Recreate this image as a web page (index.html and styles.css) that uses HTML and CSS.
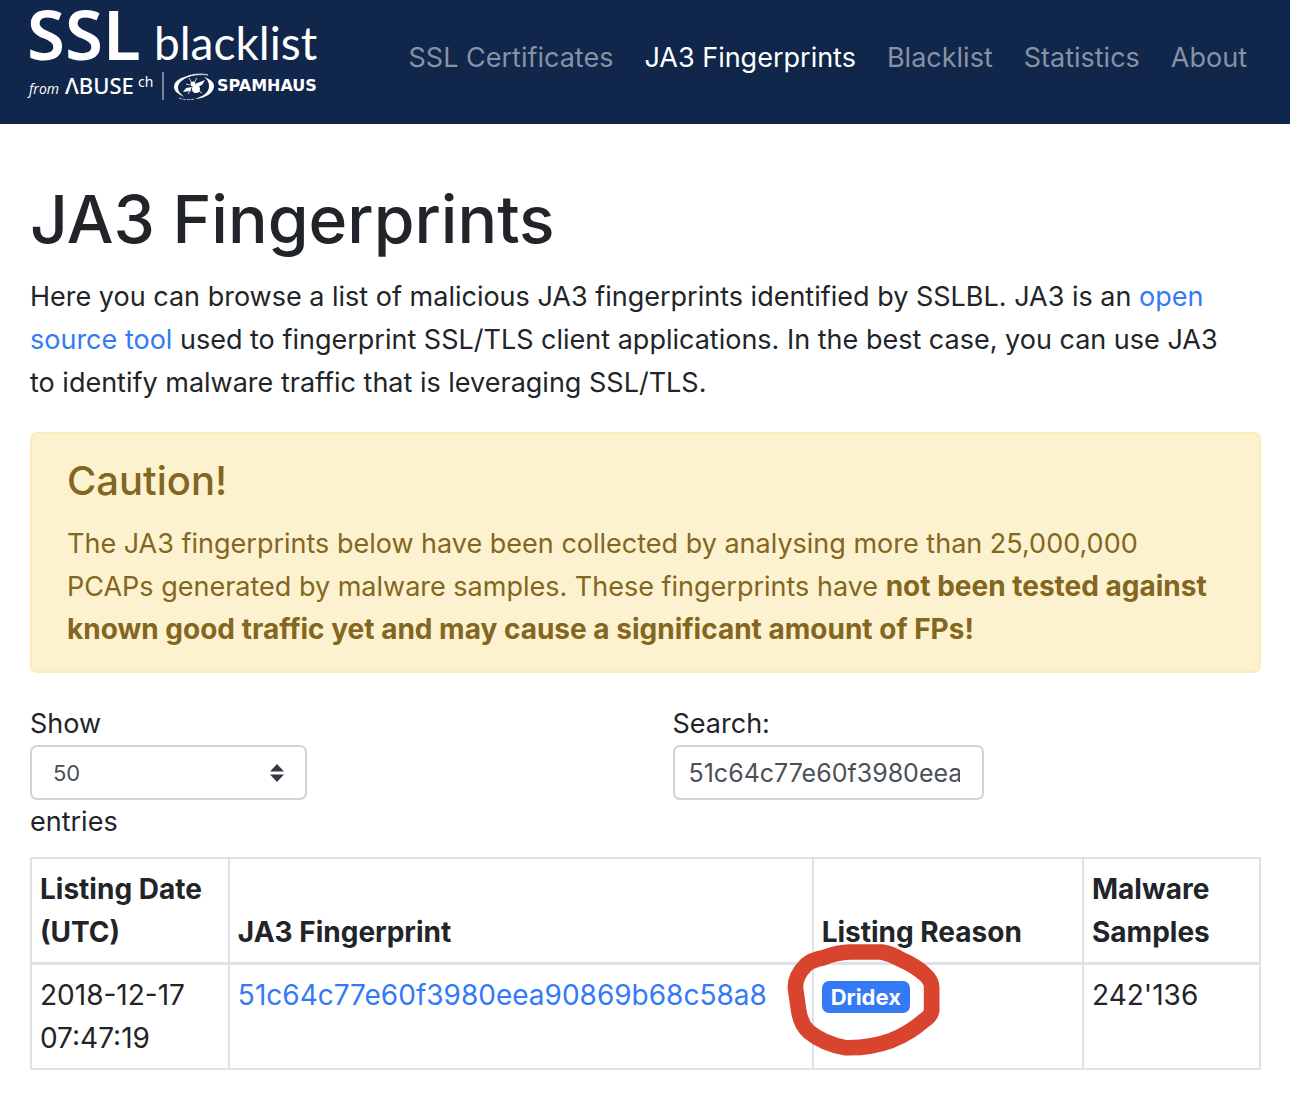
FILE: index.html
```html
<!DOCTYPE html>
<html lang="en">
<head>
<meta charset="utf-8">
<title>SSLBL | JA3 Fingerprints</title>
<meta name="viewport" content="width=device-width, initial-scale=1">
<link rel="stylesheet" href="styles.css">
</head>
<body>
<header class="navbar">
  <a class="brand" href="#" aria-label="SSL blacklist">
    <svg class="logo" viewBox="0 0 290 100" width="290" height="100">
      <text class="logo-ssl" x="-3" y="52">SSL</text>
      <text class="logo-blacklist" x="124" y="52">blacklist</text>
      <text class="logo-from" x="-1" y="86">from</text>
      <text class="logo-abuse" x="35" y="86">ΛBUSE</text>
      <text class="logo-ch" x="108" y="79">ch</text>
      <path d="M133 64v28" stroke="#9aa6b8" stroke-width="1.5"/>
      <g fill="#fff">
        <path d="M164 67C153 68 144 72 144 79c0 4 4 7 10 10-4-4-6-6-6-9 0-6 6-10 16-13z"/>
        <path d="M158 68c5-2 13-3 20-1-6-1-12 0-20 1z" stroke="#fff" stroke-width=".6"/>
        <path d="M174 69c6 2 10 5 10 9 0 6-7 12-19 13 9-3 14-7 14-13 0-4-2-7-5-9z"/>
        <path d="M149 90c5 2 11 2 16 1" fill="none" stroke="#fff" stroke-width=".7" stroke-dasharray="3 1"/>
        <ellipse cx="166" cy="81" rx="4" ry="4"/>
        <circle cx="163" cy="76" r="2.5"/>
        <path d="M165 76l10-4-3 5-5 2zM162 79l-6 1-3 4 7-1z"/>
        <path d="M162 75l-3-5M164 75l3-5M160 77l-4-1M161 82l-3 4M169 83l3 2" fill="none" stroke="#fff" stroke-width=".8"/>
      </g>
      <text class="logo-spamhaus" x="187" y="83">SPAMHAUS</text>
    </svg>
  </a>
  <nav class="menu">
    <a class="menu-link" href="#">SSL Certificates</a>
    <a class="menu-link active" href="#" aria-current="page">JA3 Fingerprints</a>
    <a class="menu-link" href="#">Blacklist</a>
    <a class="menu-link" href="#">Statistics</a>
    <a class="menu-link" href="#">About</a>
  </nav>
</header>
<main class="content">
  <h1 class="title">JA3 Fingerprints</h1>
  <p class="intro">Here you can browse a list of malicious JA3 fingerprints identified by SSLBL. JA3 is an <a href="#">open source tool</a> used to fingerprint SSL/TLS client applications. In the best case, you can use JA3 to identify malware traffic that is leveraging SSL/TLS.</p>
  <section class="alert">
    <h2 class="alert-title">Caution!</h2>
    <p class="alert-text">The JA3 fingerprints below have been collected by analysing more than 25,000,000 PCAPs generated by malware samples. These fingerprints have <strong>not been tested against known good traffic yet and may cause a significant amount of FPs!</strong></p>
  </section>
  <div class="controls">
    <div class="control">
      <label for="length">Show</label>
      <select class="field length" id="length">
        <option>10</option><option>25</option><option selected>50</option><option>100</option>
      </select>
      <span>entries</span>
    </div>
    <div class="control">
      <label for="search">Search:</label>
      <input class="field search" id="search" type="text" value="51c64c77e60f3980eea90869b68c58a8">
    </div>
  </div>
  <table class="listing">
    <colgroup><col class="col-date"><col class="col-hash"><col class="col-reason"><col class="col-samples"></colgroup>
    <thead>
      <tr><th>Listing Date (UTC)</th><th>JA3 Fingerprint</th><th>Listing Reason</th><th>Malware Samples</th></tr>
    </thead>
    <tbody>
      <tr>
        <td>2018-12-17 07:47:19</td>
        <td><a href="#">51c64c77e60f3980eea90869b68c58a8</a></td>
        <td><span class="badge">Dridex<svg class="marker" viewBox="0 0 570 420" width="190" height="140" aria-hidden="true"><path d="M240 69H335Q365 75 390 90Q440 112 466 138Q485 155 485 175V245Q482 262 460 276Q420 312 365 334Q300 358 225 356Q160 344 116 308Q92 285 86 245L76 175Q76 140 108 108Q125 92 160 86Q200 70 240 69Z"/></svg></span></td>
        <td>242'136</td>
      </tr>
    </tbody>
  </table>
</main>
</body>
</html>
```
FILE: styles.css
```css
* { box-sizing: border-box; }

body {
  margin: 0;
  background: #fff;
  color: #212529;
  font-family: Inter, "Liberation Sans", sans-serif;
  font-size: 27px;
  line-height: 43px;
}

a { color: #347af6; text-decoration: none; }

.navbar {
  display: flex;
  align-items: flex-start;
  justify-content: space-between;
  min-height: 124px;
  padding: 8px 43px 14px 30px;
  background: #10264b;
}

.logo { display: block; overflow: visible; fill: #fff; }
.logo-ssl { font: 600 69px "Noto Sans", sans-serif; }
.logo-blacklist { font: 400 46px Lato, sans-serif; }
.logo-from { font: italic 400 14px "Open Sans", sans-serif; }
.logo-abuse { font: 500 22px "Noto Sans", sans-serif; }
.logo-ch { font: 400 14px "Noto Sans", sans-serif; }
.logo-spamhaus { font: 700 16px "DejaVu Sans", sans-serif; }

.menu { display: flex; gap: 31px; padding-top: 28px; }
.menu-link { color: #8792a4; }
.menu-link.active { color: #fff; }

.content { padding: 54px 29px 26px 30px; }

.title {
  margin: 0 0 14px;
  font-size: 66px;
  font-weight: 500;
  line-height: 83px;
}

.intro { margin: 0 0 28px; padding-right: 20px; }

.alert {
  margin-bottom: 29px;
  padding: 21px 35px 20px;
  border: 2px solid #fdecba;
  border-radius: 7px;
  background: #fcf2cf;
  color: #836620;
}
.alert-title {
  margin: 0 0 15px;
  font-size: 40px;
  font-weight: 500;
  line-height: 52px;
}
.alert-text { margin: 0; }
.alert-text strong { font-size: 28px; }

.controls {
  display: grid;
  grid-template-columns: 1fr 1fr;
  column-gap: 54px;
  margin-bottom: 14px;
}
.control { display: flex; flex-direction: column; align-items: flex-start; }

.field {
  height: 55px;
  border: 2px solid #ced4da;
  border-radius: 7px;
  background-color: #fff;
  color: #495057;
  font-family: inherit;
}
.length {
  width: 277px;
  padding: 0 21px;
  appearance: none;
  background-image: url("data:image/svg+xml,%3Csvg xmlns='http://www.w3.org/2000/svg' viewBox='0 0 14 18'%3E%3Cpath fill='%23343a40' d='M0 7.5L7 0l7 7.5zM0 10.5L7 18l7-7.5z'/%3E%3C/svg%3E");
  background-repeat: no-repeat;
  background-position: right 21px center;
  background-size: 14px 18px;
  font-size: 22px;
}
.search { width: 311px; padding: 0 22px 0 14px; font-size: 25px; }

.listing {
  width: 100%;
  border-collapse: collapse;
  table-layout: fixed;
  font-size: 28px;
}
.col-date { width: 16.1%; }
.col-hash { width: 47.5%; }
.col-reason { width: 22%; }
.col-samples { width: 14.4%; }
.listing th,
.listing td {
  padding: 9px 8px 8px;
  border: 2px solid #dee2e6;
  text-align: left;
  vertical-align: top;
}
.listing th { border-bottom-width: 3px; font-weight: 700; vertical-align: bottom; }

.badge {
  position: relative;
  display: inline-block;
  padding: 0 9px;
  border-radius: 7px;
  background: #347af6;
  color: #fff;
  font-size: 22px;
  font-weight: 700;
  line-height: 32px;
}
.marker {
  position: absolute;
  top: -52px;
  left: -52px;
  fill: none;
  stroke: #d9442e;
  stroke-width: 47;
  pointer-events: none;
}
```
